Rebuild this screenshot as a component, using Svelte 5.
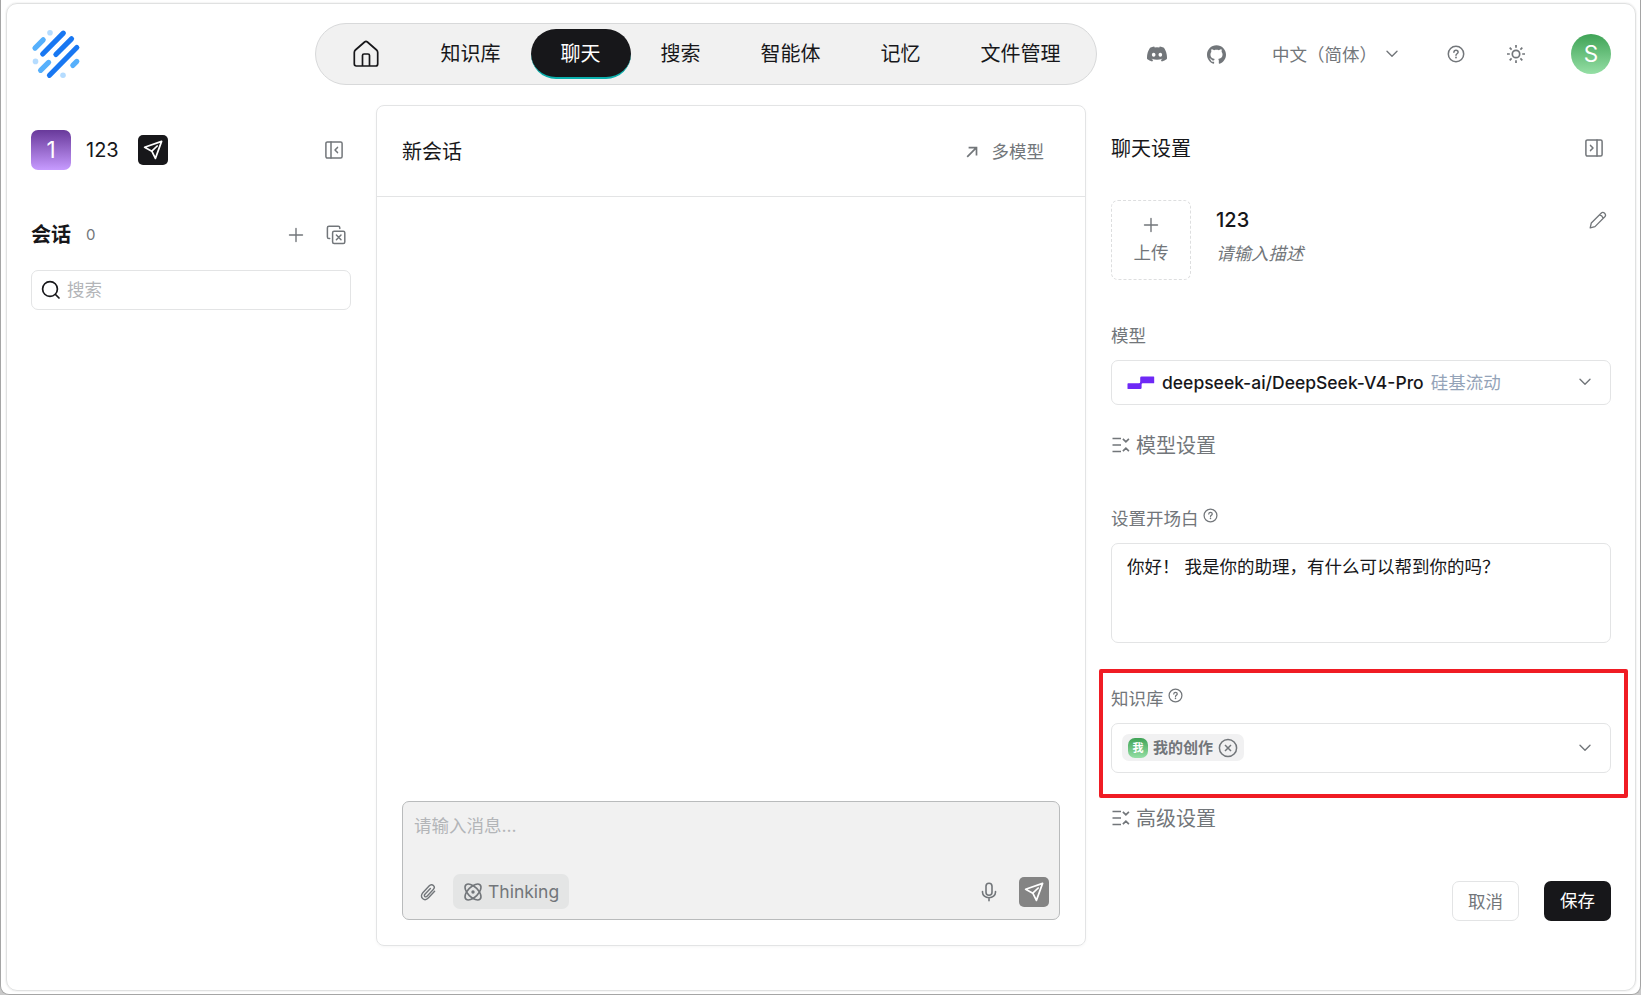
<script>
  const before = ['知识库'];
  const after = ['搜索', '智能体', '记忆', '文件管理'];
</script>

{#snippet plane()}
  <svg width="30" height="30" viewBox="0 0 30 30" fill="none" stroke="#fff" stroke-width="1.7" stroke-linejoin="round" stroke-linecap="round">
    <path d="M23.600 6.400 6.600 12.300l7.200 3.900 3.600 7.200z" /><path d="M13.800 16.200 19.200 11" />
  </svg>
{/snippet}

{#snippet plus()}
  <svg width="16" height="16" viewBox="0 0 16 16" fill="none" stroke="currentColor" stroke-width="1.4" stroke-linecap="round"><path d="M8 1.5v13M1.5 8h13" /></svg>
{/snippet}

{#snippet chevron()}
  <svg width="12" height="8" viewBox="0 0 12 8" fill="none" stroke="currentColor" stroke-width="1.4" stroke-linecap="round" stroke-linejoin="round"><path d="M1 1.200l5 5 5-5" /></svg>
{/snippet}

{#snippet help(size)}
  <svg width={size} height={size} viewBox="0 0 18 18" fill="none" stroke="currentColor" stroke-width="1.5" stroke-linecap="round" stroke-linejoin="round">
    <circle cx="9" cy="9" r="7.7" /><path d="M6.9 7.2c.1-1.2 1-1.9 2.1-1.9 1.200 0 2.100.800 2.100 1.900 0 1.500-2.100 1.600-2.100 3" /><path d="M9 12.400v.1" stroke-width="1.8" />
  </svg>
{/snippet}

{#snippet fold()}
  <svg width="19" height="16" viewBox="0 0 19 16" fill="none" stroke="currentColor" stroke-width="1.700">
    <path d="M1.500 1.500h8.500M1.500 8h8.500M1.500 14.500h8.500M11.900 1.800l3 3 3-3M11.900 14.200l3-3 3 3" />
  </svg>
{/snippet}

<div class="window">
  <div class="app">
    <header>
      <svg class="logo" width="50" height="50" viewBox="31 29 50 50" stroke-linecap="round" stroke-width="5.200" fill="none">
        <g stroke="#1877f2"><path d="M63.300 33.200 42.700 54M71.500 38.800 55.900 54.500M76.800 47.500 49.500 75.300" /></g>
        <g stroke="#56b0fc"><path d="M43.200 39.800 35 48.100M48.600 62.400 40.600 70.300M76.800 61.400 72.800 65.400" /></g>
        <g fill="#b5dcff"><circle cx="50" cy="32.800" r="2.800" /><circle cx="35.500" cy="61.400" r="2.800" /><circle cx="63" cy="75.200" r="2.800" /></g>
      </svg>

      <nav>
        <span class="home">
          <svg width="28" height="28" viewBox="0 0 28 28" fill="none" stroke="currentColor" stroke-width="1.700" stroke-linejoin="round">
            <path d="M2.300 12.500Q2.300 11 3.400 10L12.600 2Q14 .9 15.400 2L24.600 10Q25.700 11 25.700 12.500V24Q25.700 26 23.700 26H4.300Q2.300 26 2.300 24Z" />
            <path d="M10.500 26V15.500Q10.500 14 12 14H16Q17.500 14 17.500 15.500V26" />
          </svg>
        </span>
        {#each before as item}<span>{item}</span>{/each}
        <span class="active">聊天</span>
        {#each after as item}<span>{item}</span>{/each}
      </nav>

      <div class="tools">
        <svg class="discord" width="20" height="20" viewBox="0 0 24 24" fill="currentColor"><path d="M20.317 4.370a19.791 19.791 0 0 0-4.885-1.515.074.074 0 0 0-.079.037c-.210.375-.444.864-.608 1.250a18.270 18.270 0 0 0-5.487 0 12.640 12.640 0 0 0-.617-1.250.077.077 0 0 0-.079-.037A19.736 19.736 0 0 0 3.677 4.370a.070.070 0 0 0-.032.027C.533 9.046-.32 13.580.099 18.058a.082.082 0 0 0 .031.057 19.900 19.900 0 0 0 5.993 3.030.078.078 0 0 0 .084-.028 14.090 14.090 0 0 0 1.226-1.994.076.076 0 0 0-.041-.106 13.107 13.107 0 0 1-1.872-.892.077.077 0 0 1-.008-.128 10.200 10.200 0 0 0 .372-.292.074.074 0 0 1 .077-.010c3.928 1.793 8.180 1.793 12.062 0a.074.074 0 0 1 .078.010c.120.098.246.198.373.292a.077.077 0 0 1-.006.127 12.299 12.299 0 0 1-1.873.892.077.077 0 0 0-.041.107c.360.698.772 1.362 1.225 1.993a.076.076 0 0 0 .084.028 19.839 19.839 0 0 0 6.002-3.030.077.077 0 0 0 .032-.054c.500-5.177-.838-9.674-3.549-13.660a.061.061 0 0 0-.031-.030zM8.020 15.330c-1.183 0-2.157-1.085-2.157-2.419 0-1.333.956-2.419 2.157-2.419 1.210 0 2.176 1.096 2.157 2.420 0 1.333-.956 2.418-2.157 2.418zm7.975 0c-1.183 0-2.157-1.085-2.157-2.419 0-1.333.955-2.419 2.157-2.419 1.210 0 2.176 1.096 2.157 2.420 0 1.333-.946 2.418-2.157 2.418z" /></svg>
        <svg class="github" width="19" height="19" viewBox="0 0 24 24" fill="currentColor"><path d="M12 .297c-6.630 0-12 5.373-12 12 0 5.303 3.438 9.800 8.205 11.385.6.113.820-.258.820-.577 0-.285-.010-1.040-.015-2.040-3.338.724-4.042-1.610-4.042-1.610C4.422 18.070 3.633 17.700 3.633 17.700c-1.087-.744.084-.729.084-.729 1.205.084 1.838 1.236 1.838 1.236 1.070 1.835 2.809 1.305 3.495.998.108-.776.417-1.305.760-1.605-2.665-.3-5.466-1.332-5.466-5.930 0-1.310.465-2.380 1.235-3.220-.135-.303-.540-1.523.105-3.176 0 0 1.005-.322 3.300 1.230.960-.267 1.980-.399 3-.405 1.020.006 2.040.138 3 .405 2.280-1.552 3.285-1.230 3.285-1.230.645 1.653.240 2.873.120 3.176.765.840 1.230 1.910 1.230 3.220 0 4.610-2.805 5.625-5.475 5.920.420.360.810 1.096.810 2.220 0 1.606-.015 2.896-.015 3.286 0 .315.210.690.825.570C20.565 22.092 24 17.592 24 12.297c0-6.627-5.373-12-12-12" /></svg>
        <span class="lang">中文（简体）</span>
        <span class="langarrow">{@render chevron()}</span>
        <span class="helpicon">{@render help(18)}</span>
        <svg class="sun" width="20" height="20" viewBox="0 0 20 20" fill="none" stroke="currentColor" stroke-width="1.700"><circle cx="10" cy="10" r="3.700" /><path d="M10 1v2.800M10 16.200V19M1 10h2.800M16.200 10H19M3.700 3.700l1.900 1.900M14.400 14.400l1.900 1.900M3.700 16.300l1.900-1.900M14.400 5.600l1.900-1.900" /></svg>
        <span class="user">S</span>
      </div>
    </header>

    <div class="body">
      <aside class="left">
        <div class="assistant">
          <span class="badge">1</span>
          <span class="name">123</span>
          <span class="send dark">{@render plane()}</span>
          <svg class="panelicon" width="18" height="18" viewBox="0 0 18 18" fill="none" stroke="currentColor" stroke-width="1.500" stroke-linejoin="round" stroke-linecap="round"><rect x=".9" y=".9" width="16.200" height="16.200" rx="1.500" /><path d="M6 1v16M12.500 6.400 10 9l2.500 2.600" /></svg>
        </div>
        <div class="sessions">
          <b>会话</b><span class="count">0</span>
          <span class="add">{@render plus()}</span>
          <svg width="20" height="20" viewBox="0 0 20 20" fill="none" stroke="currentColor" stroke-width="1.500" stroke-linejoin="round" stroke-linecap="round"><rect x="6.600" y="6.300" width="12.200" height="12.200" rx="1.500" /><path d="M3.700 13.600H3Q1.400 13.600 1.400 12V2.800Q1.400 1.200 3 1.200h9.200Q13.800 1.200 13.800 2.800v.6M10.400 10l4.600 4.800M15 10l-4.600 4.800" /></svg>
        </div>
        <div class="search">
          <svg width="20" height="20" viewBox="0 0 20 20" fill="none" stroke="#17171a" stroke-width="1.700" stroke-linecap="round"><circle cx="9" cy="9" r="7.400" /><path d="M14.500 14.500 18 18" /></svg>
          <span>搜索</span>
        </div>
      </aside>

      <main>
        <div class="head">
          <span class="title">新会话</span>
          <span class="multi"><svg width="12" height="12" viewBox="0 0 12 12" fill="none" stroke="currentColor" stroke-width="1.700"><path d="M1.200 10.800 10.400 1.600M2.600 1.600h7.900v7.900" /></svg>多模型</span>
        </div>
        <div class="canvas"></div>
        <div class="composer">
          <div class="placeholder">请输入消息...</div>
          <div class="actions">
            <svg class="clip" width="18" height="18" viewBox="0 0 18 18" fill="none" stroke="currentColor" stroke-width="1.400" stroke-linecap="round" stroke-linejoin="round"><path d="M15.600 8.300 9.500 14.800c-1.700 1.800-4.200 2.300-5.900.8-1.700-1.500-1.400-4 .2-5.800l6.500-7c1.100-1.200 2.900-1.500 4.100-.4s1 2.900-.1 4.100l-6.300 6.800c-.6.700-1.600.8-2.200.2s-.5-1.500.1-2.200l5.500-5.900" /></svg>
            <span class="thinking">
              <svg width="20" height="20" viewBox="0 0 20 20" fill="none" stroke="currentColor" stroke-width="1.600"><ellipse cx="10" cy="10" rx="10" ry="5.200" transform="rotate(45 10 10)" /><ellipse cx="10" cy="10" rx="10" ry="5.200" transform="rotate(-45 10 10)" /><circle cx="10" cy="10" r="1.700" fill="currentColor" stroke="none" /></svg>
              Thinking
            </span>
            <svg class="mic" width="16" height="20" viewBox="0 0 16 20" fill="none" stroke="currentColor" stroke-width="1.600" stroke-linecap="round"><rect x="5" y="1.200" width="6" height="12" rx="3" /><path d="M1.500 9.500v.8a6.500 5.400 0 0 0 13 0v-.8M8 15.700v3" /></svg>
            <span class="send gray">{@render plane()}</span>
          </div>
        </div>
      </main>

      <aside class="right">
        <div class="settitle">
          <span>聊天设置</span>
          <svg width="18" height="18" viewBox="0 0 18 18" fill="none" stroke="currentColor" stroke-width="1.500" stroke-linejoin="round" stroke-linecap="round"><rect x=".9" y=".9" width="16.200" height="16.200" rx="1.500" /><path d="M12 1v16M5.500 6.400 8 9l-2.500 2.600" /></svg>
        </div>
        <div class="profile">
          <div class="upload">{@render plus()}<span>上传</span></div>
          <div class="info"><strong>123</strong><em>请输入描述</em></div>
          <svg class="pencil" width="18" height="18" viewBox="0 0 18 18" fill="none" stroke="currentColor" stroke-width="1.300" stroke-linejoin="round"><path d="M1.200 16.800 2.300 12 12.100 2.200q1.700-1.700 3.500 0.100t.2 3.500L6 15.600zM10.600 3.800q2.700.6 3.600 3.600" /></svg>
        </div>

        <div class="label l1">模型</div>
        <div class="select model">
          <svg width="28" height="14" viewBox="0 0 28 14"><path fill="#6e29f6" d="M13.200 1.800q0-1.300 1.300-1.300H26.600q.6 0 .6.600v5.600q0 .6-.6.600H15.800q-1.200 0-1.200 1.200v3.300q0 1.200-1.200 1.200H1.100q-.6 0-.6-.6V7.900q0-.6.6-.6H12q1.200 0 1.200-1.200z" /></svg>
          <span class="mname">deepseek-ai/DeepSeek-V4-Pro</span><span class="vendor">硅基流动</span>
          <span class="arrow">{@render chevron()}</span>
        </div>
        <div class="foldrow f1">{@render fold()}<span>模型设置</span></div>

        <div class="label l2">设置开场白<i>{@render help(15)}</i></div>
        <div class="greeting">你好！ 我是你的助理，有什么可以帮到你的吗？</div>

        <div class="knowledge">
          <div class="label">知识库<i>{@render help(15)}</i></div>
          <div class="select kb">
            <span class="chip"><span class="dot">我</span>我的创作
              <svg width="20" height="20" viewBox="0 0 20 20" fill="none" stroke="currentColor" stroke-width="1.500"><circle cx="10" cy="10" r="8.600" /><path d="M7 7l6 6M13 7l-6 6" /></svg>
            </span>
            <span class="arrow">{@render chevron()}</span>
          </div>
        </div>
        <div class="foldrow f2">{@render fold()}<span>高级设置</span></div>
        <div class="buttons"><span class="cancel">取消</span><span class="save">保存</span></div>
      </aside>
    </div>
  </div>
</div>

<style>
  :global(body) { margin: 0; background: #c9c9c9; overflow: hidden; }
  .window, .window * { box-sizing: border-box; }
  svg { display: block; flex: none; }
  .window {
    width: 1641px; height: 995px; padding: 3px 4px 3px 5px;
    border: 1px solid #a5a5a5; border-top: 0; border-radius: 0 0 9px 9px; background: #fff;
    font-family: Inter, "Noto Sans CJK SC", sans-serif; font-size: 17.5px; color: #17171a; white-space: nowrap;
  }
  .app { height: 988px; border: 1px solid #e0e1e1; border-radius: 11px; box-shadow: 0 0 2px #dcdcdc; padding: 0 24px; }
  header { height: 101px; padding-top: 19px; display: flex; align-items: flex-start; color: #72767a; }
  .logo { margin-top: 6px; }
  nav { margin-left: 234px; width: 782px; height: 62px; padding: 5px; border: 1px solid #d8d9da; border-radius: 31px; background: #f1f1f1; display: flex; color: #17171a; font-size: 20px; }
  nav span { height: 50px; line-height: 50px; padding: 0 30.500px 0 29.500px; }
  nav .home { width: 90px; padding: 11px 31px; }
  nav .active { background: #17171a; color: #fff; border-bottom: 2px solid #0bb0ad; border-radius: 25px; }
  .tools { height: 62px; display: flex; align-items: center; margin-left: 50px; }
  .github { margin-left: 40px; }
  .lang { margin-left: 46px; width: 105px; line-height: 26px; margin-top: 1px; }
  .langarrow { margin-left: 9px; }
  .helpicon { margin-left: 49px; }
  .sun { margin-left: 41px; }
  .user { margin-left: 45px; width: 40px; height: 40px; border-radius: 50%; background: linear-gradient(#3fa356, #95dfa5); color: #fff; font-size: 22.5px; line-height: 40px; text-align: center; }

  .body { display: flex; height: 841px; }
  .left { width: 320px; margin-right: 25px; color: #72767a; padding-top: 25px; }
  .assistant { display: flex; align-items: center; height: 40px; }
  .badge { width: 40px; height: 40px; border-radius: 7px; background: linear-gradient(#68399a, #c79bff); color: #fff; font-size: 22.5px; line-height: 40px; text-align: center; }
  .name { margin-left: 15px; font-size: 20px; color: #17171a; width: 52px; }
  .send { width: 30px; height: 30px; border-radius: 5px; }
  .dark { background: #17171a; }
  .gray { background: #848484; }
  .panelicon { margin-left: auto; margin-right: 8px; }
  .sessions { display: flex; align-items: center; height: 30px; margin-top: 50px; }
  .sessions b { font-size: 20px; color: #17171a; width: 55px; line-height: 28px; }
  .count { font-size: 15px; margin-top: -1px; }
  .add { margin-left: auto; margin-right: 22px; }
  .sessions > svg { margin-right: 5px; }
  .search { margin-top: 20px; height: 40px; border: 1px solid #e3e4e5; border-radius: 7px; display: flex; align-items: center; padding-left: 9px; gap: 6px; color: #b3b5b8; line-height: 24px; }

  main { width: 710px; height: 841px; border: 1px solid #e3e4e5; border-radius: 8px; box-shadow: 0 1px 3px #0000000a; display: flex; flex-direction: column; }
  .head { height: 91px; border-bottom: 1px solid #e3e4e5; display: flex; align-items: center; justify-content: space-between; padding: 0 41px 0 25px; }
  .title { font-size: 20px; margin-top: -2px; }
  .multi { display: flex; align-items: center; gap: 14px; color: #72767a; line-height: 24px; margin-top: 1px; }
  .canvas { flex: 1; }
  .composer { margin: 0 25px 25px; height: 119px; border: 1px solid #b9bbbc; border-radius: 7px; background: #f1f1f1; padding: 12px 10px 0 11px; color: #72767a; }
  .placeholder { line-height: 24px; height: 60px; color: #b3b5b8; }
  .actions { display: flex; align-items: center; height: 35px; }
  .clip { margin-left: 5px; }
  .thinking { margin-left: 16px; width: 116px; height: 35px; border-radius: 7px; background: #e4e5e5; display: flex; align-items: center; gap: 5px; padding-left: 10px; }
  .mic { margin-left: auto; margin-right: 22px; }

  .right { margin-left: 25px; width: 500px; padding-top: 30px; }
  .settitle { display: flex; align-items: center; justify-content: space-between; height: 26px; font-size: 20px; padding-right: 8px; }
  .settitle svg, .pencil { color: #72767a; }
  .settitle span { margin-top: -1px; }
  .profile { display: flex; margin-top: 39px; height: 80px; }
  .upload { width: 80px; height: 80px; border: 1px dashed #dddedf; border-radius: 7px; display: flex; flex-direction: column; align-items: center; padding-top: 16px; color: #72767a; }
  .upload span { line-height: 24px; margin-top: 8px; }
  .info { margin-left: 25px; display: flex; flex-direction: column; flex: 1; }
  .info strong { font-size: 20px; font-weight: 500; line-height: 24px; margin-top: 8px; }
  .info em { color: #72767a; line-height: 24px; margin-top: 10px; }
  .pencil { margin: 11px 4px 0 0; }
  .label { display: flex; color: #72767a; line-height: 24px; height: 24px; }
  .label i { margin: 1px 0 0 4px; }
  .l1 { margin-top: 44px; }
  .select { border: 1px solid #e3e4e5; border-radius: 7px; display: flex; align-items: center; }
  .arrow { margin-left: auto; margin-right: 19px; color: #72767a; }
  .model { margin-top: 12px; height: 45px; padding-left: 15px; }
  .model .arrow { margin-bottom: 1px; }
  .mname { margin-left: 7px; font-weight: 500; }
  .vendor { margin-left: 7px; color: #94a3b8; line-height: 24px; }
  .foldrow { display: flex; align-items: center; gap: 6px; height: 30px; line-height: 30px; font-size: 20px; color: #72767a; }
  .foldrow span { margin-top: 2px; }
  .f1 { margin-top: 25px; }
  .l2 { margin-top: 47px; }
  .greeting { margin-top: 12px; height: 100px; border: 1px solid #e3e4e5; border-radius: 7px; padding: 11px 15px; line-height: 24px; }
  .knowledge { width: 529px; height: 129px; margin: 26px 0 0 -12px; border: 4px solid #f01c24; border-radius: 2px; padding: 14px 13px 0 8px; }
  .kb { margin-top: 12px; height: 50px; padding-left: 10px; }
  .chip { width: 122px; height: 27px; margin-bottom: 1px; border-radius: 7px; background: #f1f1f2; display: flex; align-items: center; padding-left: 6px; font-size: 15px; font-weight: 700; color: #72767a; line-height: 22px; }
  .dot { width: 20px; height: 20px; border-radius: 7px; background: linear-gradient(#3fa356, #95dfa5); color: #fff; font-size: 11px; line-height: 20px; text-align: center; margin-right: 5px; }
  .chip svg { margin-left: 5px; }
  .f2 { margin-top: 5px; }
  .buttons { display: flex; justify-content: flex-end; gap: 25px; margin-top: 48px; }
  .buttons span { width: 67px; height: 40px; line-height: 39px; border-radius: 7px; text-align: center; }
  .cancel { border: 1px solid #e3e4e5; color: #72767a; }
  .save { background: #17171a; color: #fff; }
</style>
